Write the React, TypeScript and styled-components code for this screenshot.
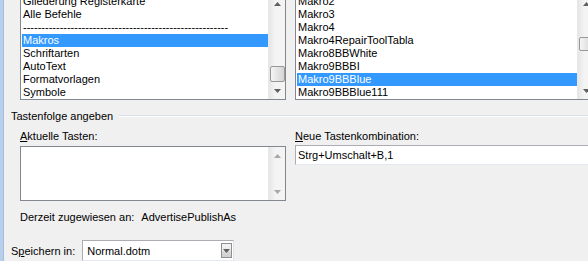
import React, { FC } from 'react';
import styled, { createGlobalStyle, css } from 'styled-components';

const GlobalStyle = createGlobalStyle`
    html, body {
        margin: 0;
        padding: 0;
        background: #f0f0f0;
        overflow: hidden;
    }
    body {
        font-family: "Liberation Sans", Arial, sans-serif;
        font-size: 11px;
        color: #000;
    }
`;

const leftItems = [
    'Gliederung Registerkarte',
    'Alle Befehle',
    '-'.repeat(56),
    'Makros',
    'Schriftarten',
    'AutoText',
    'Formatvorlagen',
    'Symbole',
];

const rightItems = [
    'Makro2',
    'Makro3',
    'Makro4',
    'Makro4RepairToolTabla',
    'Makro8BBWhite',
    'Makro9BBBI',
    'Makro9BBBlue',
    'Makro9BBBlue111',
];

const Arrow: FC<{ dir: 'up' | 'down'; dim?: boolean }> = ({ dir, dim }) => (
    <svg width="7" height="4" viewBox="0 0 7 4">
        <path
            d={dir === 'up' ? 'M0 4 L3.5 0 L7 4 Z' : 'M0 0 L7 0 L3.5 4 Z'}
            fill={dim ? '#a8a8a8' : '#606060'}
        />
    </svg>
);

interface ScrollProps {
    thumbTop?: number;
    thumbHeight?: number;
    dim?: boolean;
}

const VScroll: FC<ScrollProps> = ({ thumbTop, thumbHeight, dim }) => (
    <ScrollBar>
        <ScrollBtn>
            <Arrow dir="up" dim={dim} />
        </ScrollBtn>
        <ScrollTrack>
            {thumbTop !== undefined && (
                <Thumb style={{ marginTop: thumbTop, height: thumbHeight }} />
            )}
        </ScrollTrack>
        <ScrollBtn>
            <Arrow dir="down" dim={dim} />
        </ScrollBtn>
    </ScrollBar>
);

const App: FC = () => {
    return (
        <>
            <GlobalStyle />
            <Window>
                <Frame />
                <Dialog>
                    <ListsRow>
                        <ListBox width={266}>
                            <ListInner>
                                {leftItems.map((t) => (
                                    <Row key={t} selected={t === 'Makros'}>{t}</Row>
                                ))}
                            </ListInner>
                            <VScroll thumbTop={54} thumbHeight={16} />
                        </ListBox>
                        <ListBox width={300}>
                            <ListInner>
                                {rightItems.map((t) => (
                                    <Row key={t} selected={t === 'Makro9BBBlue'}>{t}</Row>
                                ))}
                            </ListInner>
                            <VScroll thumbTop={25} thumbHeight={14} />
                        </ListBox>
                    </ListsRow>

                    <GroupHeader>
                        <span>Tastenfolge angeben</span>
                        <Etch />
                    </GroupHeader>

                    <KeysRow>
                        <Column>
                            <Label><u>A</u>ktuelle Tasten:</Label>
                            <KeysBox>
                                <ListInner />
                                <VScroll dim />
                            </KeysBox>
                        </Column>
                        <Column>
                            <Label><u>N</u>eue Tastenkombination:</Label>
                            <TextBox>Strg+Umschalt+B,1</TextBox>
                        </Column>
                    </KeysRow>

                    <Assigned>
                        <span>Derzeit zugewiesen an:</span>
                        <span>AdvertisePublishAs</span>
                    </Assigned>

                    <SaveRow>
                        <span>S<u>p</u>eichern in:</span>
                        <Combo>
                            <span>Normal.dotm</span>
                            <DropBtn>
                                <Arrow dir="down" />
                            </DropBtn>
                        </Combo>
                    </SaveRow>
                </Dialog>
            </Window>
        </>
    );
};

export default App;

const Window = styled.div`
    display: flex;
    width: 588px;
    height: 261px;
    overflow: hidden;
`;

const Frame = styled.div`
    width: 3px;
    flex: none;
    background: #b9cfe9;
    border-right: 1px solid #a3bcdc;
`;

const Dialog = styled.div`
    flex: 1;
    padding-left: 16px;
    margin-top: -6px;
`;

const ListsRow = styled.div`
    display: flex;
    gap: 9px;
`;

const boxBorder = css`
    border: 1px solid #828790;
    background: #fff;
    box-sizing: border-box;
`;

const ListBox = styled.div<{ width: number }>`
    ${boxBorder};
    display: flex;
    flex: none;
    width: ${({ width }) => width}px;
    height: 106px;
`;

const ListInner = styled.div`
    flex: 1;
    padding-left: 1px;
    overflow: hidden;
`;

const Row = styled.div<{ selected?: boolean }>`
    height: 13px;
    line-height: 13px;
    padding-left: 1px;
    white-space: nowrap;
    overflow: hidden;
    ${({ selected }) => selected && css`
        background: #3399ff;
        color: #fff;
    `}
`;

const ScrollBar = styled.div`
    width: 17px;
    flex: none;
    display: flex;
    flex-direction: column;
    background: linear-gradient(to right, #e6e6e6, #f4f4f4 40%, #f4f4f4);
    border-left: 1px solid #e8e8e8;
    box-sizing: border-box;
`;

const ScrollBtn = styled.div`
    height: 17px;
    flex: none;
    display: flex;
    align-items: center;
    justify-content: center;
`;

const ScrollTrack = styled.div`
    flex: 1;
    display: flex;
    flex-direction: column;
    align-items: center;
`;

const Thumb = styled.div`
    width: 15px;
    box-sizing: border-box;
    border: 1px solid #979797;
    border-radius: 2px;
    background: linear-gradient(to right, #f5f5f5, #e4e4e4 50%, #d6d6d6);
`;

const GroupHeader = styled.div`
    display: flex;
    align-items: center;
    gap: 6px;
    margin: 10px 0 0 -9px;
    height: 13px;
    line-height: 13px;

    & > span {
        white-space: nowrap;
    }
`;

const Etch = styled.div`
    flex: 1;
    height: 0;
    border-top: 1px solid #d5dfe5;
    border-bottom: 1px solid #fff;
    margin-top: -1px;
`;

const KeysRow = styled.div`
    display: flex;
    gap: 9px;
    margin-top: 7px;
`;

const Column = styled.div`
    display: flex;
    flex-direction: column;
    width: 266px;
    flex: none;

    &:last-child {
        width: 300px;
    }
`;

const Label = styled.div`
    height: 13px;
    line-height: 13px;
    margin-bottom: 3px;
    white-space: nowrap;
`;

const KeysBox = styled.div`
    ${boxBorder};
    display: flex;
    height: 55px;
`;

const TextBox = styled.div`
    ${boxBorder};
    height: 20px;
    line-height: 18px;
    padding-left: 2px;
    margin-top: -1px;
    border-color: #abadb3 #e2e3ea #e3e9ef #abadb3;
`;

const Assigned = styled.div`
    display: flex;
    gap: 7px;
    margin-top: 10px;
    height: 13px;
    line-height: 13px;
`;

const SaveRow = styled.div`
    display: flex;
    align-items: center;
    gap: 7px;
    margin: 16px 0 0 -9px;
`;

const Combo = styled.div`
    ${boxBorder};
    display: flex;
    align-items: center;
    justify-content: space-between;
    width: 152px;
    height: 21px;
    padding: 0 1px 0 4px;
    border-color: #abadb3 #e2e3ea #e3e9ef #abadb3;
`;

const DropBtn = styled.div`
    width: 11px;
    height: 15px;
    box-sizing: border-box;
    border: 1px solid #8e8f8f;
    background: linear-gradient(#f2f2f2, #ebebeb 50%, #dddddd 50%, #cfcfcf);
    display: flex;
    align-items: center;
    justify-content: center;
`;
